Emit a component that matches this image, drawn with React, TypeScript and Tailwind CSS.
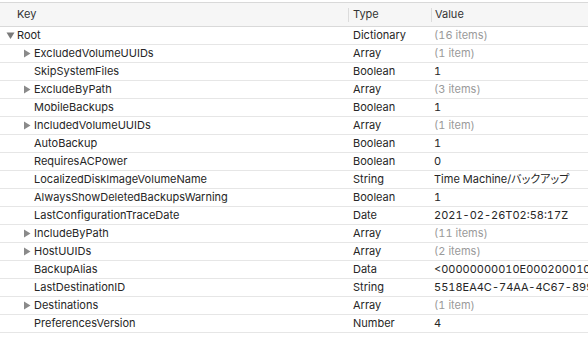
import { memo } from 'react';

interface Row {
  key: string;
  type: string;
  value: string;
  expandable?: boolean;
  muted?: boolean;
  root?: boolean;
  cjk?: boolean;
}

const rows: Row[] = [
  { key: 'Root', type: 'Dictionary', value: '(16 items)', muted: true, root: true },
  { key: 'ExcludedVolumeUUIDs', type: 'Array', value: '(1 item)', expandable: true, muted: true },
  { key: 'SkipSystemFiles', type: 'Boolean', value: '1' },
  { key: 'ExcludeByPath', type: 'Array', value: '(3 items)', expandable: true, muted: true },
  { key: 'MobileBackups', type: 'Boolean', value: '1' },
  { key: 'IncludedVolumeUUIDs', type: 'Array', value: '(1 item)', expandable: true, muted: true },
  { key: 'AutoBackup', type: 'Boolean', value: '1' },
  { key: 'RequiresACPower', type: 'Boolean', value: '0' },
  { key: 'LocalizedDiskImageVolumeName', type: 'String', value: 'Time Machine/バックアップ', cjk: true },
  { key: 'AlwaysShowDeletedBackupsWarning', type: 'Boolean', value: '1' },
  { key: 'LastConfigurationTraceDate', type: 'Date', value: '2021-02-26T02:58:17Z' },
  { key: 'IncludeByPath', type: 'Array', value: '(11 items)', expandable: true, muted: true },
  { key: 'HostUUIDs', type: 'Array', value: '(2 items)', expandable: true, muted: true },
  { key: 'BackupAlias', type: 'Data', value: '<00000000010E00020001000000000000000' },
  { key: 'LastDestinationID', type: 'String', value: '5518EA4C-74AA-4C67-8996-000000000000' },
  { key: 'Destinations', type: 'Array', value: '(1 item)', expandable: true, muted: true },
  { key: 'PreferencesVersion', type: 'Number', value: '4' },
];

const Triangle = memo(function Triangle({ down }: { down?: boolean }) {
  return (
    <svg width="9" height="9" viewBox="0 0 9 9" className="shrink-0">
      {down ? <path d="M0.5 1.5 H8.5 L4.5 8 Z" fill="#7a7a7a" /> : <path d="M1 0.5 V8.5 L7.5 4.5 Z" fill="#8a8a8a" />}
    </svg>
  );
});

export default function App() {
  return (
    <div
      className="w-[588px] h-[342px] overflow-hidden bg-white text-[11px] text-[#262626]"
      style={{ fontFamily: 'Inter, "Noto Sans CJK JP", sans-serif' }}
    >
      {/* Header */}
      <div className="mt-[2px] flex h-[25px] items-center border-t border-b border-[#d9d9d9] bg-[#f6f6f6] text-[#333]">
        <div className="flex w-[348px] items-center pl-[17px]">Key</div>
        <div className="h-[14px] w-px bg-[#dcdcdc]" />
        <div className="flex w-[82px] items-center pl-[4px]">Type</div>
        <div className="h-[14px] w-px bg-[#dcdcdc]" />
        <div className="flex flex-1 items-center pl-[3px]">Value</div>
      </div>

      {rows.map((r) => (
        <div key={r.key} className="flex h-[18px] items-center border-b border-[#e6e6e6] whitespace-nowrap">
          <div className={`flex w-[348px] items-center gap-[2px] ${r.root ? 'pl-[6px]' : 'pl-[23px]'}`}>
            {r.root || r.expandable ? <Triangle down={r.root} /> : <span className="w-[9px] shrink-0" />}
            <span>{r.key}</span>
          </div>
          <div className="w-[83px] pl-[5px]">{r.type}</div>
          <div
            className={`flex-1 overflow-hidden pl-[3px] tabular-nums ${r.muted ? 'text-[#9a9a9a]' : ''} ${
              r.cjk ? "[font-feature-settings:'palt']" : ''
            }`}
          >
            {r.value}
          </div>
        </div>
      ))}
    </div>
  );
}
